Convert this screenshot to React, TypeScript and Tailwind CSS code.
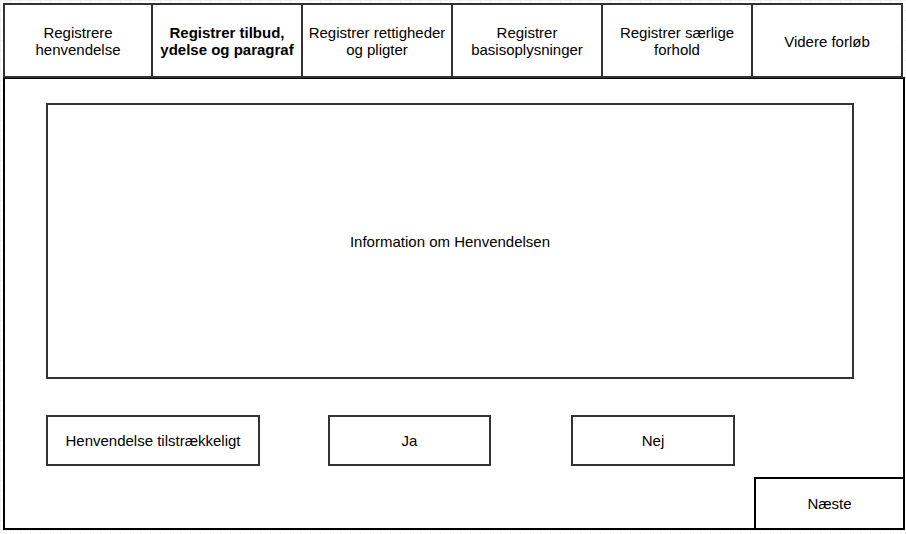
import React from "react";

const tabs: { label: React.ReactNode; bold?: boolean }[] = [
  { label: <>Registrere<br />henvendelse</> },
  { label: <>Registrer tilbud,<br />ydelse og paragraf</>, bold: true },
  { label: <>Registrer rettigheder<br />og pligter</> },
  { label: <>Registrer<br />basisoplysninger</> },
  { label: <>Registrer særlige<br />forhold</> },
  { label: <>Videre forløb</> },
];

export default function App() {
  return (
    <div
      className="w-[906px] h-[534px] overflow-hidden bg-white bg-[linear-gradient(to_right,#f1f1f1_1px,transparent_1px),linear-gradient(to_bottom,#f1f1f1_1px,transparent_1px)] bg-[size:10px_10px] pt-[3px] text-[15px] leading-[17px] text-black"
      style={{ fontFamily: '"Liberation Sans", Arial, sans-serif' }}
    >
      <div className="ml-[3px] flex">
        {tabs.map((t, i) => (
          <div
            key={i}
            className={
              "w-[150px] h-[75px] bg-white border-y-2 border-r-2 border-[#333] flex items-center justify-center text-center pt-[1px] " +
              (i === 0 ? "border-l-2 " : "") +
              (t.bold ? "font-bold" : "")
            }
          >
            <span>{t.label}</span>
          </div>
        ))}
      </div>
      <div className="ml-[3px] -mt-[1px] w-[902px] h-[453px] bg-white border-2 border-black flex flex-col">
        <div className="ml-[41px] mt-[24px] w-[808px] h-[276px] border-2 border-[#333] flex items-center justify-center">
          Information om Henvendelsen
        </div>
        <div className="ml-[41px] mt-[36px] flex">
          <div className="w-[214px] h-[51px] border-2 border-[#333] flex items-center justify-center">
            Henvendelse tilstrækkeligt
          </div>
          <div className="ml-[68px] w-[163px] h-[51px] border-2 border-[#333] flex items-center justify-center">
            Ja
          </div>
          <div className="ml-[80px] w-[164px] h-[51px] border-2 border-[#333] flex items-center justify-center">
            Nej
          </div>
        </div>
        <div className="mt-auto self-end -mr-[2px] -mb-[2px] w-[151px] h-[53px] bg-white border-2 border-black flex items-center justify-center">
          Næste
        </div>
      </div>
    </div>
  );
}
